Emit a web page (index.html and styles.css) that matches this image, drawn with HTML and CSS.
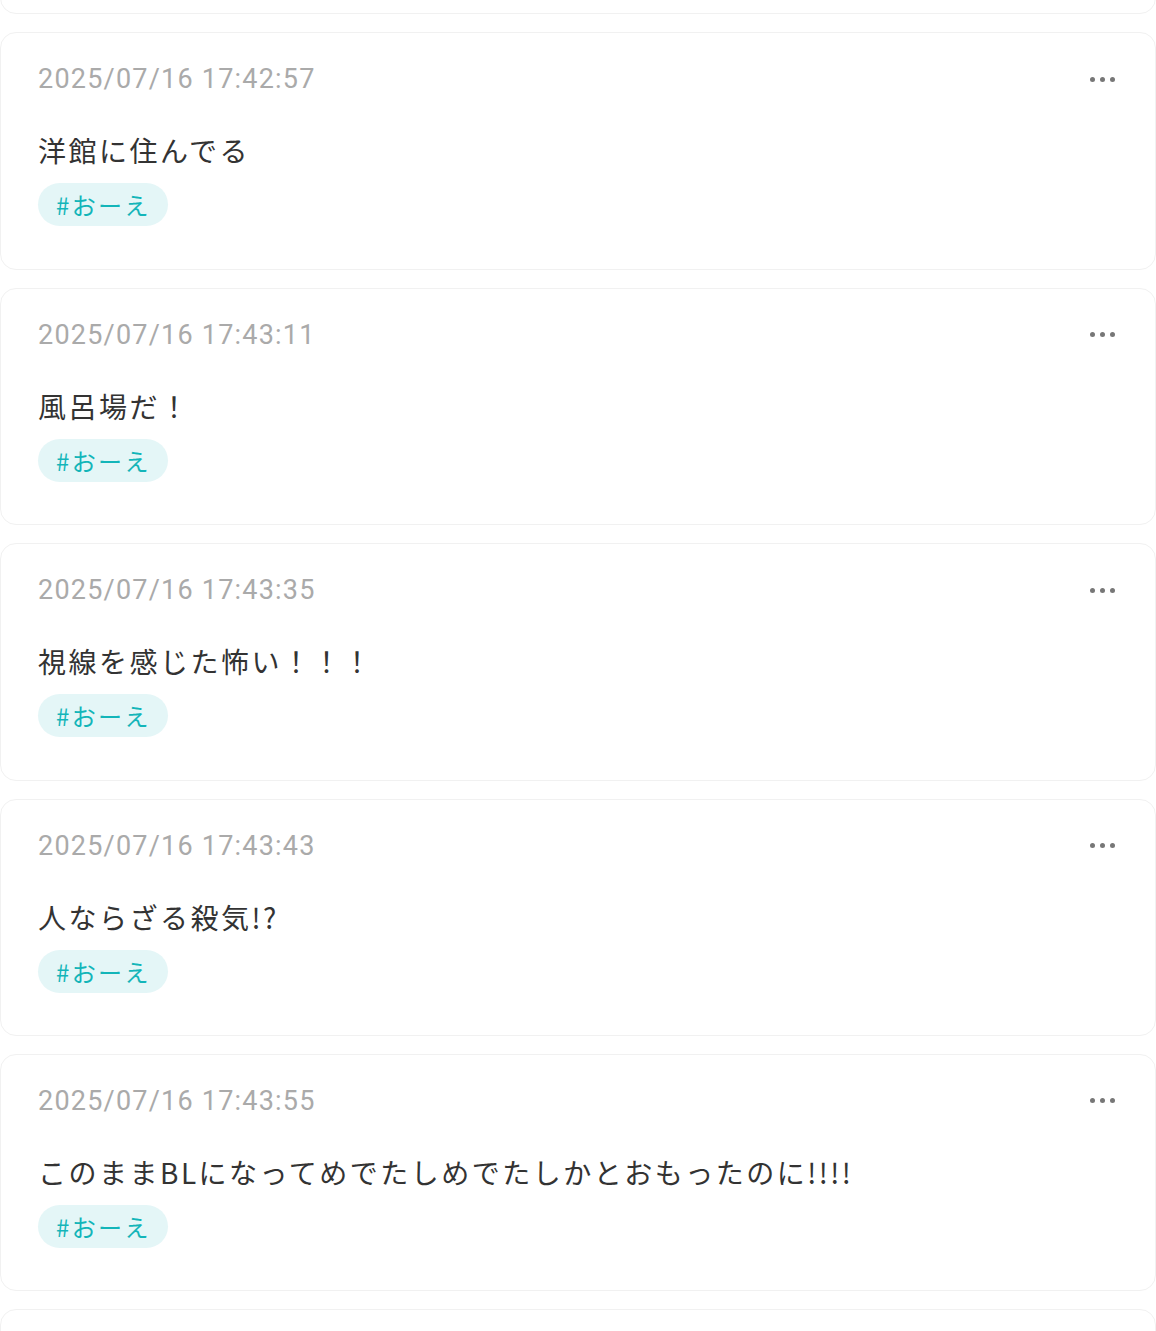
FILE: index.html
```html
<!DOCTYPE html>
<html lang="ja">
<head>
<meta charset="utf-8">
<link rel="stylesheet" href="styles.css">
</head>
<body>
<main class="list">
  <article class="card">
    <div class="card-head"><time class="stamp">2025/07/16 17:42:40</time><span class="more"><i></i><i></i><i></i></span></div>
    <p class="body">洋館</p>
    <div class="tags"><span class="tag">#おーえ</span></div>
  </article>
  <article class="card">
    <div class="card-head"><time class="stamp">2025/07/16 17:42:57</time><span class="more"><i></i><i></i><i></i></span></div>
    <p class="body">洋館に住んでる</p>
    <div class="tags"><span class="tag">#おーえ</span></div>
  </article>
  <article class="card">
    <div class="card-head"><time class="stamp">2025/07/16 17:43:11</time><span class="more"><i></i><i></i><i></i></span></div>
    <p class="body">風呂場だ！</p>
    <div class="tags"><span class="tag">#おーえ</span></div>
  </article>
  <article class="card">
    <div class="card-head"><time class="stamp">2025/07/16 17:43:35</time><span class="more"><i></i><i></i><i></i></span></div>
    <p class="body">視線を感じた怖い！！！</p>
    <div class="tags"><span class="tag">#おーえ</span></div>
  </article>
  <article class="card">
    <div class="card-head"><time class="stamp">2025/07/16 17:43:43</time><span class="more"><i></i><i></i><i></i></span></div>
    <p class="body">人ならざる殺気!?</p>
    <div class="tags"><span class="tag">#おーえ</span></div>
  </article>
  <article class="card">
    <div class="card-head"><time class="stamp">2025/07/16 17:43:55</time><span class="more"><i></i><i></i><i></i></span></div>
    <p class="body">このままBLになってめでたしめでたしかとおもったのに!!!!</p>
    <div class="tags"><span class="tag">#おーえ</span></div>
  </article>
  <article class="card">
    <div class="card-head"><time class="stamp">2025/07/16 17:44:02</time><span class="more"><i></i><i></i><i></i></span></div>
    <p class="body">つづく</p>
    <div class="tags"><span class="tag">#おーえ</span></div>
  </article>
</main>
</body>
</html>
```
FILE: styles.css
```css
html, body {
  margin: 0;
  padding: 0;
  background: #ffffff;
}
body {
  font-family: Roboto, "Noto Sans CJK JP", sans-serif;
  color: #333333;
  overflow: hidden;
}
.list {
  display: flex;
  flex-direction: column;
  gap: 18px;
  margin-top: -223px;
}
.card {
  box-sizing: border-box;
  height: 237.4px;
  border: 1.5px solid #f1f1f1;
  border-radius: 16px;
  padding: 28px 38px 0 37px;
  background: #fff;
}
.card-head {
  display: flex;
  align-items: center;
  justify-content: space-between;
  height: 36px;
}
.stamp {
  font-size: 27px;
  letter-spacing: 0.045em;
  color: #aaaaaa;
}
.more {
  display: flex;
  gap: 5px;
  margin-right: 2px;
}
.more i {
  width: 5px;
  height: 5px;
  border-radius: 50%;
  background: #777777;
}
.body {
  margin: 32px 0 0 0;
  font-size: 28px;
  line-height: 42px;
  letter-spacing: 2.5px;
  color: #333333;
  font-family: "Noto Sans CJK JP", sans-serif;
}
.tags {
  margin-top: 12px;
  display: flex;
}
.tag {
  display: inline-flex;
  align-items: center;
  height: 43px;
  padding: 0 17px 0 18px;
  border-radius: 22px;
  background: #e4f6f7;
  color: #13b5b9;
  font-size: 24px;
  letter-spacing: 0.1em;
  font-family: "Noto Sans CJK JP", sans-serif;
}
```
